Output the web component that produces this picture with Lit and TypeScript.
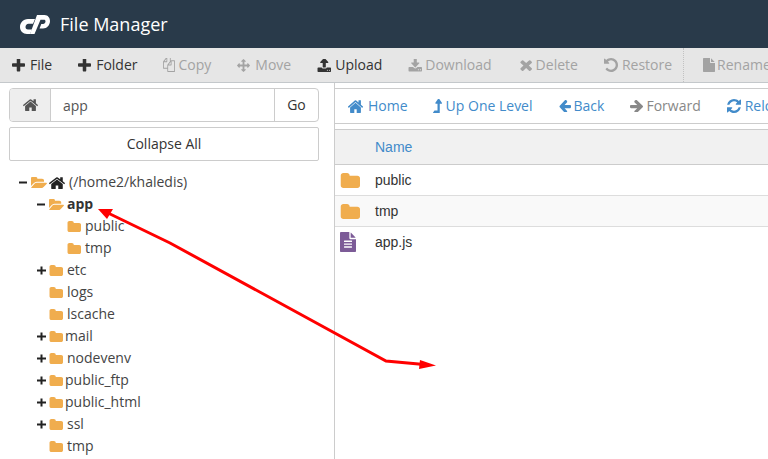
import { LitElement, html, css } from "lit";
import { customElement } from "lit/decorators.js";

const P: Record<string, string> = {
  plus: "M1600 736v192q0 40-28 68t-68 28h-416v416q0 40-28 68t-68 28h-192q-40 0-68-28t-28-68v-416h-416q-40 0-68-28t-28-68v-192q0-40 28-68t68-28h416v-416q0-40 28-68t68-28h192q40 0 68 28t28 68v416h416q40 0 68 28t28 68z",
  home: "M1472 992v480q0 26-19 45t-45 19h-384v-384h-256v384h-384q-26 0-45-19t-19-45v-480q0-1 .5-3t.5-3l575-474 575 474q1 2 1 6zm223-69l-62 74q-8 9-21 11h-3q-13 0-21-7l-692-577-692 577q-12 8-24 7-13-2-21-11l-62-74q-8-10-7-23.5t11-21.5l719-599q32-26 76-26t76 26l244 204v-195q0-14 9-23t23-9h192q14 0 23 9t9 23v408l219 182q10 8 11 21.5t-7 23.5z",
  folder: "M1728 608v704q0 92-66 158t-158 66h-1216q-92 0-158-66t-66-158v-960q0-92 66-158t158-66h320q92 0 158 66t66 158v32h672q92 0 158 66t66 158z",
  open: "M1845 931q0 35-53 93l-336 396q-43 51-120.5 86.5t-143.5 35.5h-1088q-34 0-60.5-13t-26.5-43q0-35 53-93l336-396q43-51 120.5-86.5t143.5-35.5h1088q34 0 60.5 13t26.5 43zm-343-344v160h-832q-94 0-197 47.5t-164 119.5l-337 396-5 6q0-4-.5-12.5t-.5-12.5v-960q0-92 66-158t158-66h320q92 0 158 66t66 158v32h544q92 0 158 66t66 158z",
  left: "M1664 896v128q0 53-32.5 90.5t-84.5 37.5h-704l293 294q38 36 38 90t-38 90l-75 76q-37 37-90 37-52 0-91-37l-651-652q-37-37-37-90 0-52 37-91l651-650q38-38 91-38 52 0 90 38l75 74q38 38 38 91t-38 91l-293 293h704q52 0 84.5 37.5t32.5 90.5z",
  right: "M1600 960q0 54-37 91l-651 651q-39 37-91 37-51 0-90-37l-75-75q-38-38-38-91t38-91l293-293h-704q-52 0-84.5-37.5t-32.5-90.5v-128q0-53 32.5-90.5t84.5-37.5h704l-293-294q-38-36-38-90t38-90l75-75q38-38 90-38 53 0 91 38l651 651q37 35 37 90z",
  upload: "M1344 1472q0-26-19-45t-45-19-45 19-19 45 19 45 45 19 45-19 19-45zm256 0q0-26-19-45t-45-19-45 19-19 45 19 45 45 19 45-19 19-45zm128-224v320q0 40-28 68t-68 28h-1472q-40 0-68-28t-28-68v-320q0-40 28-68t68-28h427q21 56 70.5 92t110.5 36h256q61 0 110.5-36t70.5-92h427q40 0 68 28t28 68zm-325-648q-17 40-59 40h-256v448q0 26-19 45t-45 19h-256q-26 0-45-19t-19-45v-448h-256q-42 0-59-40-17-39 14-69l448-448q18-19 45-19t45 19l448 448q31 30 14 69z",
  download: "M1344 1344q0-26-19-45t-45-19-45 19-19 45 19 45 45 19 45-19 19-45zm256 0q0-26-19-45t-45-19-45 19-19 45 19 45 45 19 45-19 19-45zm128-224v320q0 40-28 68t-68 28h-1472q-40 0-68-28t-28-68v-320q0-40 28-68t68-28h465l135 136q58 56 136 56t136-56l136-136h464q40 0 68 28t28 68zm-325-569q17 41-14 70l-448 448q-18 19-45 19t-45-19l-448-448q-31-29-14-70 17-39 59-39h256v-448q0-26 19-45t45-19h256q26 0 45 19t19 45v448h256q42 0 59 39z",
  times: "M1490 1322q0 40-28 68l-136 136q-28 28-68 28t-68-28l-294-294-294 294q-28 28-68 28t-68-28l-136-136q-28-28-28-68t28-68l294-294-294-294q-28-28-28-68t28-68l136-136q28-28 68-28t68 28l294 294 294-294q28-28 68-28t68 28l136 136q28 28 28 68t-28 68l-294 294 294 294q28 28 28 68z",
  undo: "M1664 896q0 156-61 298t-164 245-245 164-298 61q-172 0-327-72.5t-264-204.5q-7-10-6.5-22.5t8.5-20.5l137-138q10-9 25-9 16 2 23 12 73 95 179 147t225 52q104 0 198.5-40.5t163.5-109.5 109.5-163.5 40.5-198.5-40.5-198.5-109.5-163.5-163.5-109.5-198.5-40.5q-98 0-188 35.5t-160 101.5l137 138q31 30 14 69-17 40-59 40h-448q-26 0-45-19t-19-45v-448q0-42 40-59 39-17 69 14l130 129q107-101 244.5-156.5t284.5-55.5q156 0 298 61t245 164 164 245 61 298z",
  refresh: "M1639 1056q0 5-1 7-64 268-268 434.5t-478 166.5q-146 0-282.5-55t-243.5-157l-129 129q-19 19-45 19t-45-19-19-45v-448q0-26 19-45t45-19h448q26 0 45 19t19 45-19 45l-137 137q71 66 161 102t187 36q134 0 250-65t186-179q11-17 53-117 8-23 30-23h192q13 0 22.5 9.5t9.5 22.5zm25-800v448q0 26-19 45t-45 19h-448q-26 0-45-19t-19-45 19-45l138-138q-148-137-349-137-134 0-250 65t-186 179q-11 17-53 117-8 23-30 23h-199q-13 0-22.5-9.5t-9.5-22.5v-7q65-268 270-434.5t480-166.5q146 0 284 55.5t245 156.5l130-129q19-19 45-19t45 19 19 45z",
  move: "M1792 896q0 26-19 45l-256 256q-19 19-45 19t-45-19-19-45v-128h-384v384h128q26 0 45 19t19 45-19 45l-256 256q-19 19-45 19t-45-19l-256-256q-19-19-19-45t19-45 45-19h128v-384h-384v128q0 26-19 45t-45 19-45-19l-256-256q-19-19-19-45t19-45l256-256q19-19 45-19t45 19 19 45v128h384v-384h-128q-26 0-45-19t-19-45 19-45l256-256q19-19 45-19t45 19l256 256q19 19 19 45t-19 45-45 19h-128v384h384v-128q0-26 19-45t45-19 45 19l256 256q19 19 19 45z",
  copy: "M1696 384q40 0 68 28t28 68v1216q0 40-28 68t-68 28h-960q-40 0-68-28t-28-68v-288h-544q-40 0-68-28t-28-68v-672q0-40 20-88t48-76l408-408q28-28 76-48t88-20h416q40 0 68 28t28 68v328q68-40 128-40h416zm-544 213l-299 299h299v-299zm-640-384l-299 299h299v-299zm196 647l316-316v-416h-384v416q0 40-28 68t-68 28h-416v640h512v-256q0-40 20-88t48-76zm956 804v-1152h-384v416q0 40-28 68t-68 28h-416v640h896z",
  file: "M1024 512v-472q22 14 36 28l408 408q14 14 28 36h-472zm-128 32q0 40 28 68t68 28h544v1056q0 40-28 68t-68 28h-1344q-40 0-68-28t-28-68v-1600q0-40 28-68t68-28h800v544z",
  text: "M1596 476q14 14 28 36h-472v-472q22 14 36 28zm-476 164h544v1056q0 40-28 68t-68 28h-1344q-40 0-68-28t-28-68v-1600q0-40 28-68t68-28h800v544q0 40 28 68t68 28zm160 736v-64q0-14-9-23t-23-9h-704q-14 0-23 9t-9 23v64q0 14 9 23t23 9h704q14 0 23-9t9-23zm0-256v-64q0-14-9-23t-23-9h-704q-14 0-23 9t-9 23v64q0 14 9 23t23 9h704q14 0 23-9t9-23zm0-256v-64q0-14-9-23t-23-9h-704q-14 0-23 9t-9 23v64q0 14 9 23t23 9h704q14 0 23-9t9-23z",
  up: "M1402 548q-18 36-58 36h-192v864q0 14-9 23t-23 9h-704q-21 0-29-18-8-20 5-35l160-192q9-11 25-11h320v-640h-192q-40 0-58-37-17-37 9-68l320-384q18-22 49-22t49 22l320 384q27 32 9 69z",
};

/* Tight bounds of each glyph, so that a CSS size is the size of the ink. */
const VB: Record<string, string> = {
  plus: "192 192 1408 1408",
  home: "97 128 1598 1408",
  folder: "0 128 1728 1408",
  open: "0 128 1845 1408",
  left: "128 192 1536 1408",
  right: "128 192 1472 1408",
  upload: "0 192 1728 1472",
  download: "0 128 1728 1472",
  times: "166 238 1324 1316",
  undo: "128 128 1536 1536",
  refresh: "128 128 1536 1536",
  move: "0 0 1792 1792",
  copy: "0 128 1792 1664",
  file: "0 0 1536 1792",
  text: "128 0 1536 1792",
  up: "384 128 1024 1344",
};

const icon = (name: string, cls = "") =>
  html`<svg class="ic i-${name} ${cls}" viewBox=${VB[name]} preserveAspectRatio="none" aria-hidden="true"><path d=${P[name]}></path></svg>`;

const tools = [
  ["plus", "File", false],
  ["plus", "Folder", false],
  ["copy", "Copy", true],
  ["move", "Move", true],
  ["upload", "Upload", false],
  ["download", "Download", true],
  ["times", "Delete", true],
  ["undo", "Restore", true],
] as const;

const navs = [
  ["home", "Home", false],
  ["up", "Up One Level", false],
  ["left", "Back", false],
  ["right", "Forward", true],
  ["refresh", "Reload", false],
] as const;

type Row = { name: string; level: number; exp?: "+" | "-"; open?: boolean; bold?: boolean; tight?: boolean };
const tree: Row[] = [
  { name: "app", level: 1, exp: "-", open: true, bold: true },
  { name: "public", level: 2 },
  { name: "tmp", level: 2 },
  { name: "etc", level: 1, exp: "+" },
  { name: "logs", level: 1 },
  { name: "lscache", level: 1 },
  { name: "mail", level: 1, exp: "+", tight: true },
  { name: "nodevenv", level: 1, exp: "+" },
  { name: "public_ftp", level: 1, exp: "+", tight: true },
  { name: "public_html", level: 1, exp: "+", tight: true },
  { name: "ssl", level: 1, exp: "+" },
  { name: "tmp", level: 1 },
];

@customElement("app-root")
export class AppRoot extends LitElement {
  static styles = css`
    :host { display: block; width: 768px; height: 459px; overflow: hidden; position: relative; background: #fff;
      font-family: "Open Sans", sans-serif; font-size: 14px; color: #333; }
    * { box-sizing: border-box; }
    .ic { fill: currentColor; flex: none; display: block; }
    .header { height: 48px; background: #293a4a; display: flex; align-items: center; padding-left: 19px; gap: 9px; color: #fff; font-size: 18px; }
    .logo { width: 32px; height: 21px; fill: #fff; display: block; margin-top: 1px; }
    .toolbar { height: 35px; background: #e6e6e6; border-bottom: 1px solid #c4c8cb; display: flex; align-items: center; padding-left: 12px; gap: 26px; white-space: nowrap; overflow: hidden; }
    .tool { display: flex; align-items: center; gap: 4px; flex: none; color: #333; }
    .tool span { margin-top: -2px; }
    .tool.off { color: #a3a3a3; }
    .tool .i-plus { width: 13px; height: 13px; margin-right: 1px; }
    .tool .i-copy { width: 12px; height: 14px; margin-left: -1px; }
    .tool .i-move { width: 13px; height: 13px; margin-right: 1px; }
    .tool .i-upload { width: 14px; height: 13px; }
    .tool .i-download { width: 14px; height: 13px; margin-right: -1px; }
    .tool .i-times { width: 13px; height: 12px; margin-left: 1px; }
    .tool .i-undo { width: 14px; height: 14px; }
    .tool .i-file { width: 12px; height: 14px; margin-right: -2px; }
    .divider { align-self: stretch; margin-left: -15px; margin-right: -7px; border-left: 1px dotted #c2c2c2; flex: none; }
    .main { display: flex; height: 376px; }
    .left { width: 334px; flex: none; padding: 5px 15px 0 9px; }
    .path { display: flex; height: 34px; border: 1px solid #ccc; border-radius: 4px; overflow: hidden; }
    .path .addon { width: 41px; background: #eee; border-right: 1px solid #ccc; display: flex; align-items: center; justify-content: center; color: #555; padding-bottom: 2px; }
    .path .addon .ic { width: 15px; height: 13px; }
    .path .value { flex: 1; padding-left: 12px; display: flex; align-items: center; color: #555; }
    .path .go { width: 44px; border-left: 1px solid #ccc; display: flex; align-items: center; justify-content: center; padding-bottom: 2px; }
    .collapse { margin-top: 5px; height: 34px; border: 1px solid #ccc; border-radius: 2px; display: flex; align-items: center; justify-content: center; padding-bottom: 2px; }
    .tree { margin-top: 10px; }
    .row { height: 22px; display: flex; align-items: center; white-space: nowrap; color: #444; }
    .row span { margin-top: -2px; }
    .l0 { padding-left: 10px; }
    .l1 { padding-left: 28px; }
    .l2 { padding-left: 58px; }
    .exp { width: 9px; height: 9px; flex: none; margin-right: 3px; fill: #222; display: block; }
    .row .noexp { width: 12px; flex: none; margin: 0; }
    .fold { color: #f0ad4e; width: 14px; height: 11px; margin-right: 4px; }
    .fold.i-open { width: 15px; margin-right: 3px; }
    .l0 .fold { width: 16px; margin-right: 2px; }
    .l0 .hm { width: 16px; height: 13px; color: #222; margin-right: 4px; }
    .tight .fold { margin-right: 2px; }
    .row .bold { font-weight: 700; color: #333; }
    .right { flex: 1; min-width: 0; border-left: 1px solid #ccc; padding-top: 5px; overflow: hidden; }
    .nav { height: 36px; border-top: 1px solid #ccc; border-bottom: 1px solid #ccc; display: flex; align-items: center; padding-left: 13px; gap: 26px; white-space: nowrap; color: #428bca; }
    .navi { display: flex; align-items: center; gap: 4px; flex: none; }
    .navi span { margin-top: -2px; }
    .navi.off { color: #888; }
    .navi .i-home { width: 15px; height: 14px; margin-right: 1px; }
    .navi .i-up { width: 9px; height: 14px; margin-left: -1px; }
    .navi .i-left { width: 12px; height: 12px; margin-right: -1px; }
    .navi .i-right { width: 13px; height: 12px; margin-right: -1px; }
    .navi .i-refresh { width: 14px; height: 14px; }
    .table { margin-top: 5px; font-family: "Liberation Sans", Arial, sans-serif; }
    .th { height: 36px; background: #f1f1f1; border-top: 1px solid #ccc; border-bottom: 1px solid #ccc; padding-left: 40px; display: flex; align-items: center; color: #428bca; }
    .tr { height: 31px; display: flex; align-items: center; padding-left: 5px; border-bottom: 1px solid #ddd; }
    .tr.alt { background: #f9f9f9; }
    .tr.last { border-bottom: 0; padding-bottom: 2px; }
    .tr .i-folder { width: 20px; height: 15px; margin-right: 15px; color: #f0ad4e; }
    .tr .i-text { width: 16px; height: 20px; margin-right: 19px; color: #7c5b97; }
    .over { position: absolute; left: 0; top: 0; width: 768px; height: 459px; pointer-events: none; }
  `;

  render() {
    return html`
      <div class="header">
        <svg class="logo" viewBox="19 16 32 21" aria-label="cPanel">
          <path d="M35 21H28C23 21 20 25 20 29C20 33 23 36 27 36H30L32 31.5H28C26.3 31.5 25.5 30.3 25.5 29C25.500 27.300 26.800 25.800 28.500 25.800H33Z"></path>
          <path d="M37 17H44.500C48 17 50 20 50 23C50 27 47 30.500 43 30.500H39.500L41.300 26H43C44.700 26 45.500 24.500 45.500 23.300C45.500 22.300 45 21.700 44 21.700H40.500L34.500 36H30Z"></path>
        </svg>
        <span>File Manager</span>
      </div>
      <div class="toolbar">
        ${tools.map(([i, t, off]) => html`<div class="tool ${off ? "off" : ""}">${icon(i)}<span>${t}</span></div>`)}
        <div class="divider"></div>
        <div class="tool off">${icon("file")}<span>Rename</span></div>
      </div>
      <div class="main">
        <div class="left">
          <div class="path">
            <div class="addon">${icon("home")}</div>
            <div class="value">app</div>
            <div class="go">Go</div>
          </div>
          <div class="collapse">Collapse All</div>
          <div class="tree">
            <div class="row l0">
              <svg class="exp" viewBox="0 0 9 9"><rect x="0" y="3.500" width="8" height="2"></rect></svg>
              ${icon("open", "fold")}
              ${icon("home", "hm")}
              <span>(/home2/khaledis)</span>
            </div>
            ${tree.map(
              (r) => html`<div class="row l${r.level} ${r.tight ? "tight" : ""}">
                ${r.exp === "-"
                  ? html`<svg class="exp" viewBox="0 0 9 9"><rect x="0" y="3.500" width="8" height="2"></rect></svg>`
                  : r.exp === "+"
                  ? html`<svg class="exp" viewBox="0 0 9 9"><path d="M3.500 0.500h2v3h3.500v2h-3.500v3h-2v-3h-3.500v-2h3.500z"></path></svg>`
                  : r.level === 1
                  ? html`<i class="noexp"></i>`
                  : ""}
                ${icon(r.open ? "open" : "folder", "fold")}
                <span class=${r.bold ? "bold" : ""}>${r.name}</span>
              </div>`
            )}
          </div>
        </div>
        <div class="right">
          <div class="nav">
            ${navs.map(([i, t, off]) => html`<div class="navi ${off ? "off" : ""}">${icon(i)}<span>${t}</span></div>`)}
          </div>
          <div class="table">
            <div class="th">Name</div>
            <div class="tr">${icon("folder")}<span>public</span></div>
            <div class="tr alt">${icon("folder")}<span>tmp</span></div>
            <div class="tr last">${icon("text")}<span>app.js</span></div>
          </div>
        </div>
      </div>
      <svg class="over" viewBox="0 0 768 459" aria-hidden="true">
        <polyline points="108,213 170,243 386,361 424,364.500" fill="none" stroke="#f00" stroke-width="3"></polyline>
        <polygon points="98,209 113,209 107,219" fill="#f00"></polygon>
        <polygon points="436,365.500 420,360 419,369" fill="#f00"></polygon>
      </svg>
    `;
  }
}
